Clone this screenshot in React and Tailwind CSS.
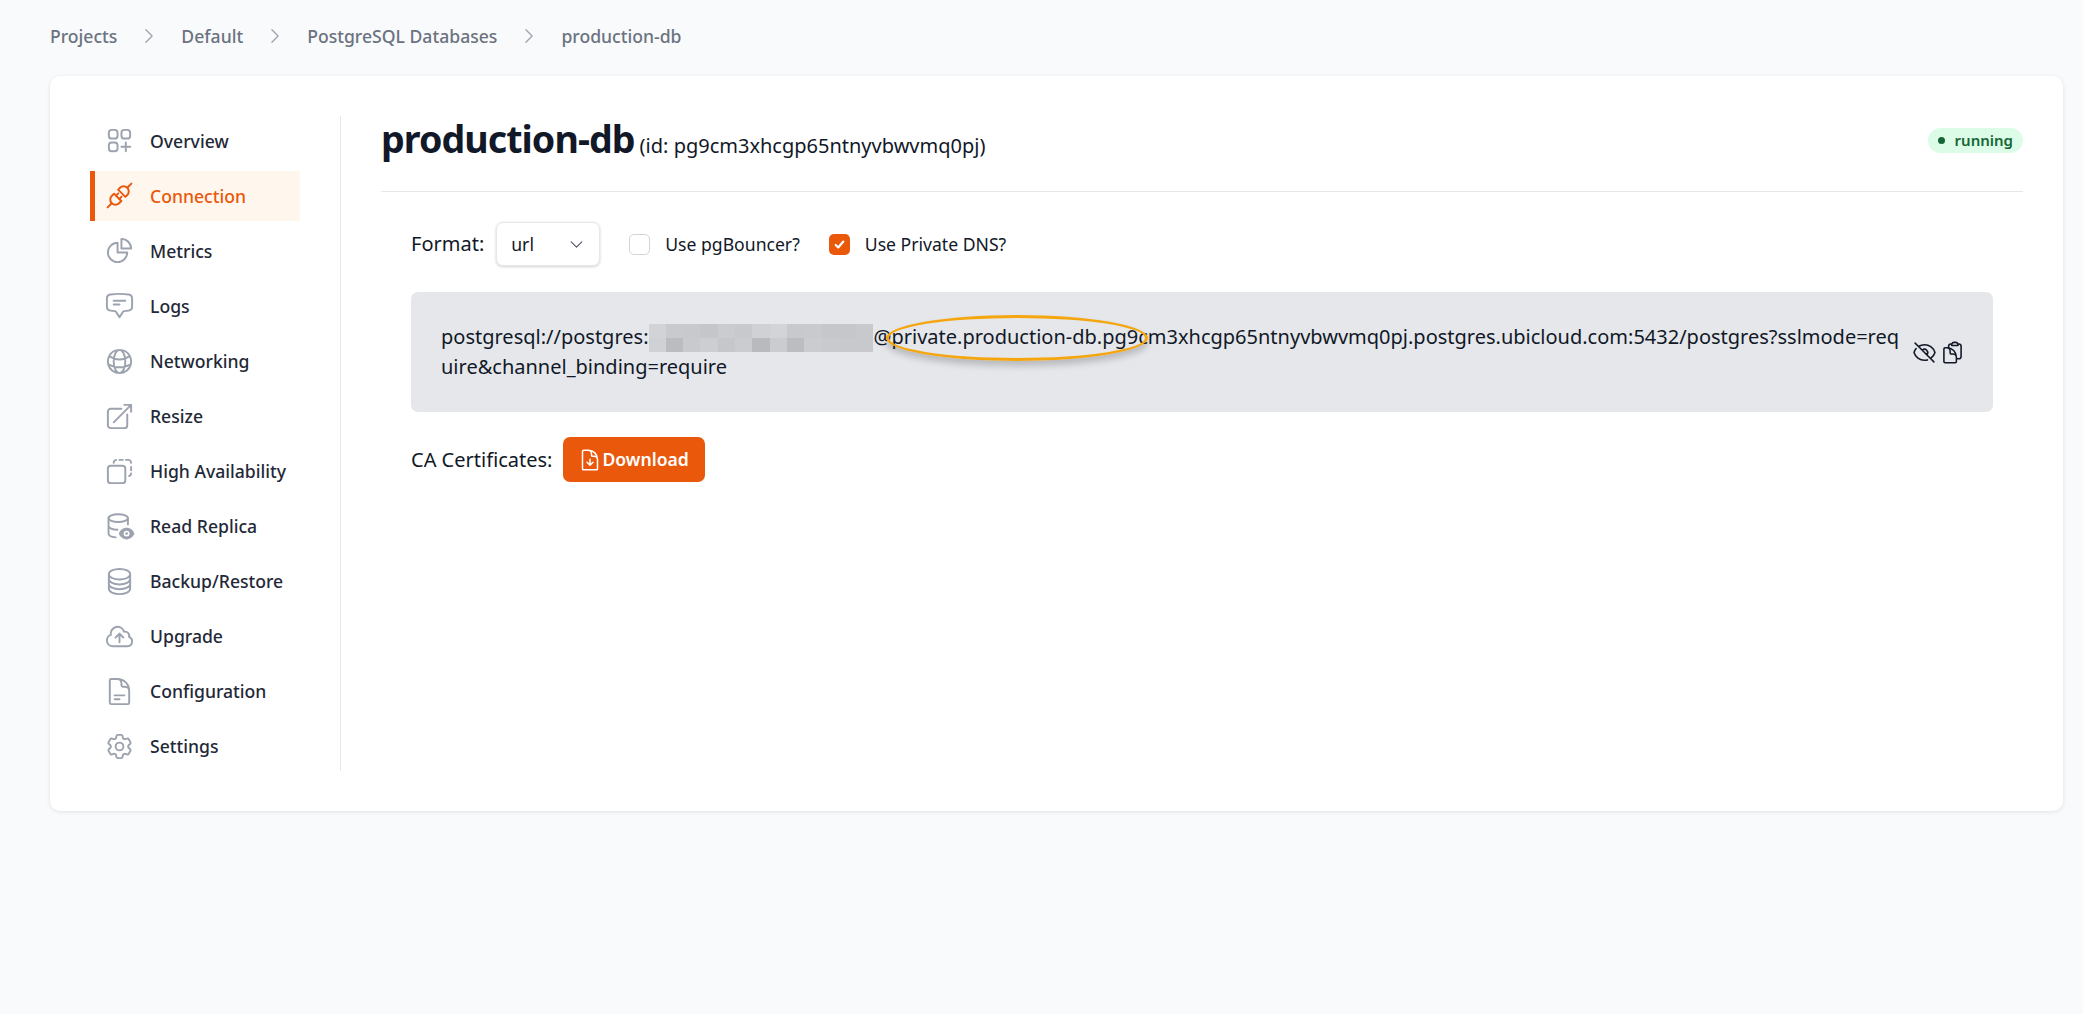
import {
  HiOutlineArrowTopRightOnSquare,
  HiOutlineChartPie,
  HiOutlineChatBubbleBottomCenterText,
  HiOutlineChevronDown,
  HiOutlineChevronRight,
  HiOutlineCircleStack,
  HiOutlineClipboardDocument,
  HiOutlineCloudArrowUp,
  HiOutlineCog6Tooth,
  HiOutlineDocumentArrowDown,
  HiOutlineDocumentText,
  HiOutlineEyeSlash,
  HiOutlineGlobeAlt,
  HiOutlineSquaresPlus,
} from 'react-icons/hi2';

function PlugIcon({ className }) {
  return (
    <svg viewBox="0 0 24 24" fill="none" stroke="currentColor" strokeWidth="1.500" strokeLinecap="round" strokeLinejoin="round" className={className}>
      <g transform="rotate(-45 12 12)">
        <path d="M-1 12H3.500M20.500 12H25" />
        <path d="M7.500 8H10v8H7.500a4 4 0 0 1 0-8z" />
        <path d="M10 10.200h2.500M10 13.800h2.500" />
        <path d="M14.500 8h2a4 4 0 0 1 0 8h-2z" />
      </g>
    </svg>
  );
}

function HaIcon({ className }) {
  return (
    <svg viewBox="0 0 24 24" fill="none" stroke="currentColor" strokeWidth="1.500" strokeLinecap="round" strokeLinejoin="round" className={className}>
      <rect x="3" y="7.500" width="13.500" height="13.500" rx="2.250" />
      <path d="M7.500 5.250A2.250 2.250 0 0 1 9.500 3M12 3h2.500M17 3h1.500A2.250 2.250 0 0 1 21 5.250M21 8.500v2.500M21 13.500a2.250 2.250 0 0 1-1.500 2" />
    </svg>
  );
}

function ReplicaIcon({ className }) {
  return (
    <svg viewBox="0 0 24 24" fill="none" stroke="currentColor" strokeWidth="1.500" strokeLinecap="round" strokeLinejoin="round" className={className}>
      <ellipse cx="11" cy="5.500" rx="7.500" ry="3" />
      <path d="M3.500 5.500v12c0 1.500 2.500 2.700 5.500 2.900M18.500 5.500v5M3.500 11.500c0 1.600 3 3 7 3" />
      <path fill="currentColor" stroke="none" fillRule="evenodd" d="M17.500 13c3 0 5.200 2 6 4.500-.8 2.500-3 4.500-6 4.500s-5.200-2-6-4.500c.8-2.500 3-4.500 6-4.500zm0 2.200a2.300 2.300 0 1 0 0 4.600 2.300 2.300 0 0 0 0-4.600z" />
      <circle cx="17.500" cy="17.500" r="1" fill="currentColor" stroke="none" />
    </svg>
  );
}

const NAV = [
  { label: 'Overview', icon: HiOutlineSquaresPlus },
  { label: 'Connection', icon: PlugIcon, active: true },
  { label: 'Metrics', icon: HiOutlineChartPie },
  { label: 'Logs', icon: HiOutlineChatBubbleBottomCenterText },
  { label: 'Networking', icon: HiOutlineGlobeAlt },
  { label: 'Resize', icon: HiOutlineArrowTopRightOnSquare },
  { label: 'High Availability', icon: HaIcon },
  { label: 'Read Replica', icon: ReplicaIcon },
  { label: 'Backup/Restore', icon: HiOutlineCircleStack },
  { label: 'Upgrade', icon: HiOutlineCloudArrowUp },
  { label: 'Configuration', icon: HiOutlineDocumentText },
  { label: 'Settings', icon: HiOutlineCog6Tooth },
];

const CRUMBS = ['Projects', 'Default', 'PostgreSQL Databases', 'production-db'];

// blurred password blocks, two rows of thirteen
const BLUR = [
  'bg-[#d2d3d7]', 'bg-[#c9cace]', 'bg-[#c8c9cd]', 'bg-[#c5c6ca]', 'bg-[#cbccd0]', 'bg-[#c8c9cd]', 'bg-[#d0d1d5]', 'bg-[#d3d4d8]', 'bg-[#c8c9cd]', 'bg-[#c9cace]', 'bg-[#c6c7cb]', 'bg-[#c6c7cb]', 'bg-[#c8c9cd]',
  'bg-[#d0d1d5]', 'bg-[#bbbcc0]', 'bg-[#c9cace]', 'bg-[#cdced2]', 'bg-[#c6c7cb]', 'bg-[#cbccd0]', 'bg-[#b9babe]', 'bg-[#cbccd0]', 'bg-[#bcbdc1]', 'bg-[#cbccd0]', 'bg-[#c9cace]', 'bg-[#c8c9cd]', 'bg-[#c8c9cd]',
];

export default function App() {
  return (
    <div className="min-h-[1014px] bg-[#f9fafb] pr-[20px] pl-[50px] font-['Noto_Sans',sans-serif] text-[17.600px] text-[#111827]">
      <nav className="mb-[4px] flex h-[72px] items-center text-[#6b7280]">
        {CRUMBS.map((crumb, i) => (
          <div key={crumb} className="flex items-center">
            {i > 0 && <HiOutlineChevronRight className="mx-[22px] size-[20px] text-[#9ca3af]" />}
            <span className="font-medium">{crumb}</span>
          </div>
        ))}
      </nav>

      <div className="flex h-[735px] rounded-[10px] bg-white p-[40px] shadow-[0_1px_4px_rgba(0,0,0,0.1)]">
        <aside className="flex w-[251px] shrink-0 flex-col gap-[5.150px] border-r border-[#e5e7eb] pr-[40px]">
          {NAV.map((item) => (
            <a
              key={item.label}
              className={
                item.active
                  ? 'flex h-[50px] items-center gap-[15px] border-l-[5px] border-[#ea580c] bg-[#fff7ed] pl-[9px] font-medium text-[#ea580c]'
                  : 'flex h-[50px] items-center gap-[15px] border-l-[5px] border-transparent pl-[9px] font-medium text-[#1f2937]'
              }
            >
              <item.icon className={item.active ? 'size-[31px] shrink-0 text-[#ea580c]' : 'size-[31px] shrink-0 text-[#9ca3af]'} />
              {item.label}
            </a>
          ))}
        </aside>

        <main className="min-w-0 flex-1 pl-[40px]">
          <div className="flex h-[76px] items-start justify-between border-b border-[#e5e7eb]">
            <div className="flex items-baseline gap-[5px]">
              <h1 className="text-[37.600px] leading-[46px] font-bold tracking-tight text-[#111827]">production-db</h1>
              <span className="text-[20px] text-[#111827]">(id: pg9cm3xhcgp65ntnyvbwvmq0pj)</span>
            </div>
            <span className="mt-[12px] flex h-[25px] items-center gap-[10px] rounded-full bg-[#dcfce7] px-[10px] text-[15px] font-semibold text-[#166534]">
              <span className="size-[7px] rounded-full bg-[#166534]" />
              running
            </span>
          </div>

          <div className="px-[30px]">
            <div className="mt-[30px] flex items-center">
              <span className="mr-[12px] text-[20px]">Format:</span>
              <div className="flex h-[44px] w-[104px] items-center justify-between rounded-[7px] border border-[#e5e7eb] bg-white pr-[14px] pl-[14px] shadow-[0_1px_3px_rgba(0,0,0,0.18)]">
                url
                <HiOutlineChevronDown className="size-[17px] text-[#4b5563]" />
              </div>
              <span className="ml-[29px] size-[21px] rounded-[5px] border border-[#d1d5db] bg-white" />
              <span className="ml-[15px]">Use pgBouncer?</span>
              <span className="ml-[29px] flex size-[21px] items-center justify-center rounded-[5px] bg-[#ea580c]">
                <svg viewBox="0 0 20 20" className="size-[17px]" fill="none" stroke="white" strokeWidth="2.500" strokeLinecap="round" strokeLinejoin="round">
                  <path d="M5.500 10.500l3 3 6-7" />
                </svg>
              </span>
              <span className="ml-[15px]">Use Private DNS?</span>
            </div>

            <div className="relative mt-[26px] flex h-[120px] items-center rounded-[7px] bg-[#e5e7eb] pr-[30px] pl-[30px]">
              <p className="w-[1468px] shrink-0 text-[20px] leading-[30px]">
                postgresql://postgres:
                <span className="inline-grid h-[28px] w-[225px] translate-y-[2px] grid-cols-13 align-top">
                  {BLUR.map((color, i) => (
                    <span key={i} className={color} />
                  ))}
                </span>
                @private.production-db.pg9cm3xhcgp65ntnyvbwvmq0pj.postgres.ubicloud.com:5432/postgres?sslmode=req
                <br />
                uire&channel_binding=require
              </p>
              <div className="ml-[3px] flex h-[24px] items-center gap-[3px]">
                <HiOutlineEyeSlash className="size-[25px]" />
                <HiOutlineClipboardDocument className="size-[25px]" />
              </div>
              <div className="absolute top-[23px] left-[475px] h-[46px] w-[262px] rounded-[50%] border-[3px] border-[#f5a60f] shadow-[0_5px_7px_rgba(0,0,0,0.2)]" />
            </div>

            <div className="mt-[25px] flex items-center gap-[11px]">
              <span className="text-[20px]">CA Certificates:</span>
              <button className="flex h-[45px] items-center rounded-[7px] bg-[#ea580c] pr-[16px] pl-[15px] font-semibold text-white">
                <HiOutlineDocumentArrowDown className="size-[24px]" />
                Download
              </button>
            </div>
          </div>
        </main>
      </div>
    </div>
  );
}
